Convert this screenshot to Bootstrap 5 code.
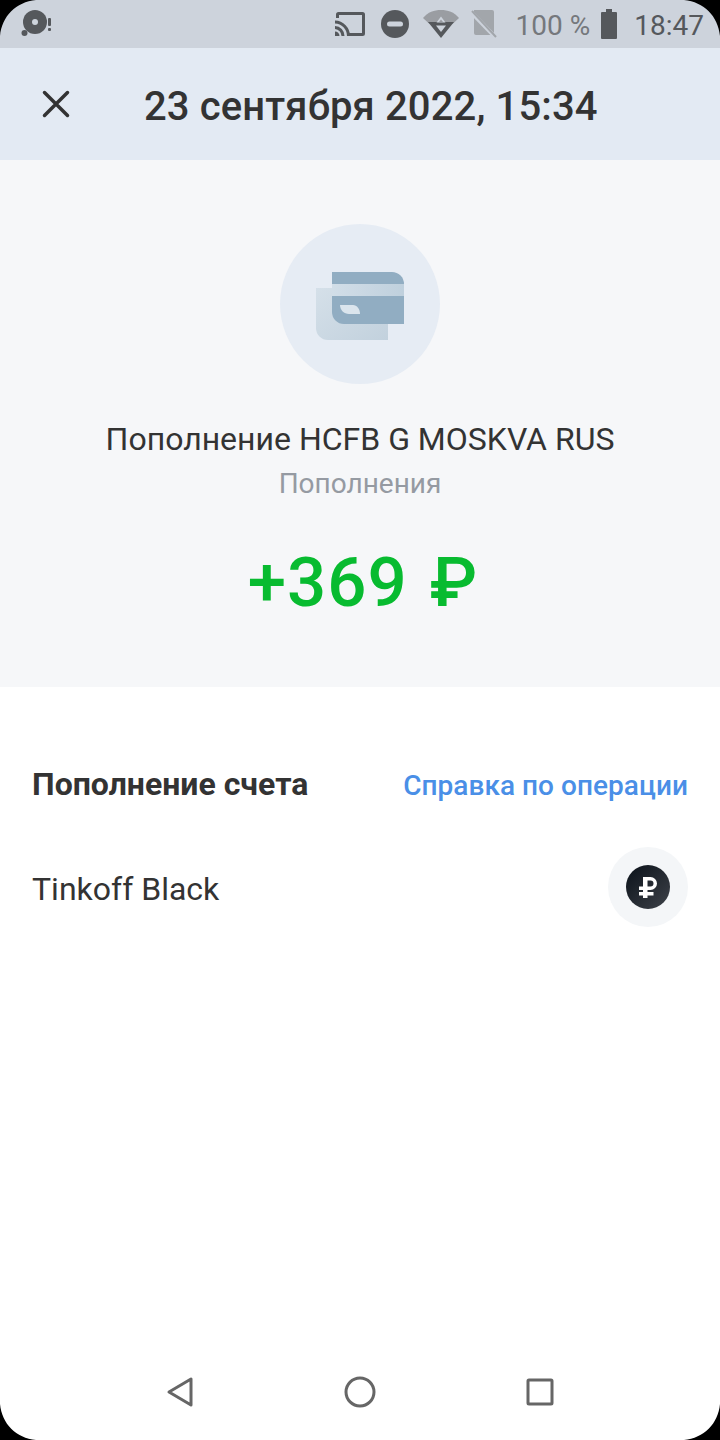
<!DOCTYPE html>
<html lang="ru">
<head>
<meta charset="utf-8">
<title>Операция</title>
<link href="https://cdn.jsdelivr.net/npm/bootstrap@5.3.0/dist/css/bootstrap.min.css" rel="stylesheet">
<style>
html,body{margin:0;background:#fff}
body{width:720px;height:1440px;overflow:hidden;font-family:Roboto,"Liberation Sans",sans-serif;color:#333}
.phone{position:relative;width:720px;height:1440px;overflow:hidden}
.statusbar{height:48px;background:#cdd3dc;color:#55585c;padding:0 16px 0 21px;font-size:28px}
.statusbar svg{display:block;flex:none}
.st-txt{padding-top:3px;line-height:1;white-space:nowrap}
.st-pct{color:#75787c;margin-left:19px}
.st-time{margin-left:17px}
.g14{margin-left:14px}.g13{margin-left:13px}.g12{margin-left:12px}.g11{margin-left:11px}
.topbar{height:112px;background:#e3eaf3;padding-left:40px}
.topbar h1{font-size:40px;font-weight:500;margin:6px 0 0 72px;color:#333;line-height:1;white-space:nowrap;letter-spacing:.13px}
.hero{height:527px;background:#f6f7f9;padding-top:64px}
.hero-circle{width:160px;height:160px;border-radius:50%;background:#e6ecf4}
.hero-name{font-size:32px;line-height:38px;margin-top:36px;color:#333}
.hero-cat{font-size:28px;line-height:32px;margin-top:10px;color:#959aa2}
.hero-sum{font-size:69px;font-weight:500;line-height:80px;margin-top:43px;padding-left:6px;color:#08bb30;letter-spacing:1px;word-spacing:4px}
.details{padding:0 32px}
.d-head{height:44px;margin-top:76px}
.d-title{font-size:32px;font-weight:700;color:#333;line-height:1;margin-bottom:3px}
.d-link{font-size:28px;font-weight:500;color:#4a8fe7;text-decoration:none;line-height:1;margin-top:2px;letter-spacing:.05px}
.d-row{margin-top:40px;height:80px}
.d-acc{font-size:32px;color:#333;margin-top:4px}
.acc-circle{width:80px;height:80px;border-radius:50%;background:#f4f6f8}
.navbar-bottom{position:absolute;left:0;right:0;bottom:0;height:96px}
.navslot{position:absolute}
.nav-back{left:166px;top:32px}
.nav-home{left:344px;top:32px}
.nav-recent{left:526px;top:34px}
.corner{position:absolute;width:36px;height:36px}
.c-tl{top:0;left:0}.c-tr{top:0;right:0}
.c-bl{bottom:0;left:0}.c-br{bottom:0;right:0}
</style>
</head>
<body>
<div class="phone">
  <div class="statusbar d-flex align-items-center justify-content-between">
    <svg width="34" height="28" viewBox="0 0 34 28" fill="#55585c">
      <circle cx="14" cy="12" r="12"/>
      <circle cx="14" cy="12" r="3" fill="#cdd3dc"/>
      <circle cx="3.500" cy="23" r="3"/>
      <rect x="27" y="8" width="3" height="8" rx="1"/>
      <rect x="27" y="18" width="3" height="3" rx="1"/>
    </svg>
    <div class="d-flex align-items-center">
      <svg width="32" height="26" viewBox="0 0 32 26"><path d="M2 7V3.500A2.500 2.500 0 0 1 4.500 1h24A2.500 2.500 0 0 1 31 3.500v19a2.500 2.500 0 0 1-2.500 2.500H15v-3h13V4H5v3z" fill="#55585c"/><path d="M1 9.500A15.500 15.500 0 0 1 16 25h-3A12.500 12.500 0 0 0 1 12.500zM1 15a10 10 0 0 1 9.500 10h-3A7 7 0 0 0 1 18zM1 20.500A4.500 4.500 0 0 1 5.500 25H1z" fill="#55585c"/></svg>
      <svg class="g14" width="30" height="30" viewBox="0 0 30 30"><circle cx="15" cy="15" r="14" fill="#55585c"/><rect x="7" y="12.500" width="16" height="5" rx="2.500" fill="#cdd3dc"/></svg>
      <svg class="g13" width="36" height="30" viewBox="0 0 36 30"><path d="M0 9C5 3 11 1 18 1s13 2 18 8l-6.500 6h-23z" fill="#9a9da2"/><path d="M5 13h26L18 29z" fill="#55585c"/><path d="M13 16.500h10L18 23z" fill="#cdd3dc"/><path d="M18 7.500l4.500 6h-9z" fill="#cdd3dc"/><path d="M18 10.500l2 2.500h-4z" fill="#9a9da2"/></svg>
      <svg class="g12" width="26" height="30" viewBox="0 0 26 30"><path d="M3 1h18a2 2 0 0 1 2 2v23H5a2 2 0 0 1-2-2z" fill="#a2a6ab"/><path d="M0 3l26 27" stroke="#cdd3dc" stroke-width="4"/><path d="M1 2l24 26" stroke="#a2a6ab" stroke-width="2"/></svg>
      <span class="st-txt st-pct">100 %</span>
      <svg class="g11" width="16" height="30" viewBox="0 0 16 30"><path d="M5 0h6v3h4a1 1 0 0 1 1 1v25a1 1 0 0 1-1 1H1a1 1 0 0 1-1-1V4a1 1 0 0 1 1-1h4z" fill="#55585c"/></svg>
      <span class="st-txt st-time">18:47</span>
    </div>
  </div>

  <div class="topbar d-flex align-items-center">
    <svg width="32" height="32" viewBox="0 0 32 32"><path d="M4.500 4.500l23 23M27.500 4.500l-23 23" stroke="#333" stroke-width="3.500" stroke-linecap="round"/></svg>
    <h1>23 сентября 2022, 15:34</h1>
  </div>

  <div class="hero text-center">
    <div class="hero-circle mx-auto d-flex align-items-center justify-content-center">
      <svg width="88" height="72" viewBox="0 0 88 72">
        <defs>
          <linearGradient id="gc" x1="0" y1="0" x2="1" y2="1"><stop offset="0" stop-color="#d5e0e9"/><stop offset="1" stop-color="#c2d1dd"/></linearGradient>
          <linearGradient id="gb" x1="0" y1="0" x2="1" y2="0"><stop offset="0" stop-color="#d2dee8"/><stop offset="1" stop-color="#bfd0dd"/></linearGradient>
        </defs>
        <path d="M0 20h72v52H12A12 12 0 0 1 0 60z" fill="url(#gc)"/>
        <path d="M16 4h60a12 12 0 0 1 12 12v40H28a12 12 0 0 1-12-12z" fill="#91adc2"/>
        <rect x="16" y="16" width="72" height="12" fill="url(#gb)"/>
        <path d="M24 37h13c4 0 7 4 7 9H33c-5 0-9-4-9-9z" fill="#dbe5ed"/>
      </svg>
    </div>
    <div class="hero-name">Пополнение HCFB G MOSKVA RUS</div>
    <div class="hero-cat">Пополнения</div>
    <div class="hero-sum">+369 ₽</div>
  </div>

  <div class="details">
    <div class="d-head d-flex align-items-center justify-content-between">
      <span class="d-title">Пополнение счета</span>
      <a class="d-link" href="#">Справка по операции</a>
    </div>
    <div class="d-row d-flex align-items-center justify-content-between">
      <span class="d-acc">Tinkoff Black</span>
      <span class="acc-circle d-flex align-items-center justify-content-center">
        <svg width="44" height="44" viewBox="0 0 44 44">
          <defs><linearGradient id="gd" x1="0" y1="0" x2="1" y2="1"><stop offset="0" stop-color="#0a1119"/><stop offset="1" stop-color="#3e4249"/></linearGradient></defs>
          <circle cx="22" cy="22" r="22" fill="url(#gd)"/>
          <path fill-rule="evenodd" d="M17 12h7.500a6.500 6.500 0 0 1 0 13H21.500v2h6v3.500h-6V33H17v-2.500h-4V27h4v-2h-4v-3.500h4zM21.500 15.500V21.500h3a3 3 0 0 0 0-6z" fill="#fff"/>
        </svg>
      </span>
    </div>
  </div>

  <div class="navbar-bottom">
    <svg class="navslot nav-back" width="28" height="32" viewBox="0 0 28 32"><path d="M25 3v26L3 16z" fill="none" stroke="#666" stroke-width="3" stroke-linejoin="round"/></svg>
    <svg class="navslot nav-home" width="32" height="32" viewBox="0 0 32 32"><circle cx="16" cy="16" r="14" fill="none" stroke="#666" stroke-width="3"/></svg>
    <svg class="navslot nav-recent" width="28" height="28" viewBox="0 0 28 28"><rect x="2" y="2" width="24" height="24" rx="1" fill="none" stroke="#666" stroke-width="3"/></svg>
  </div>

  <svg class="corner c-tl" viewBox="0 0 36 36"><path d="M0 0h36C16 2 2 16 0 36z" fill="#000"/></svg>
  <svg class="corner c-tr" viewBox="0 0 36 36"><path d="M36 0H0c20 2 34 16 36 36z" fill="#000"/></svg>
  <svg class="corner c-bl" viewBox="0 0 36 36"><path d="M0 36h36C16 34 2 20 0 0z" fill="#000"/></svg>
  <svg class="corner c-br" viewBox="0 0 36 36"><path d="M36 36H0c20-2 34-16 36-36z" fill="#000"/></svg>
</div>
<script src="https://cdn.jsdelivr.net/npm/bootstrap@5.3.0/dist/js/bootstrap.bundle.min.js"></script>
</body>
</html>
